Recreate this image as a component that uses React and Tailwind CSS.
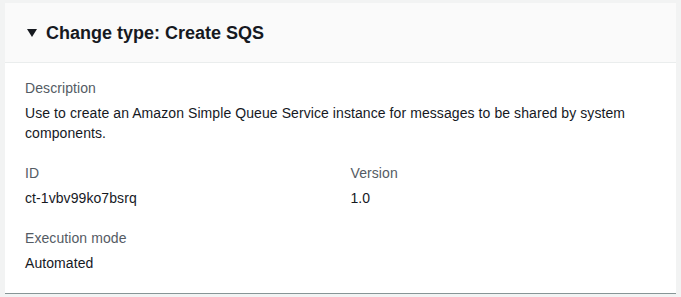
import React from 'react';

const Field = ({ label, children }) => (
  <div>
    <div className="text-[14px] leading-5 text-[#545b64] tracking-[0.08px]">{label}</div>
    <div className="mt-[5px] text-[14px] leading-5 text-[#16191f] tracking-[0.08px]">{children}</div>
  </div>
);

const App = () => {
  return (
    <div className="min-h-screen bg-[#f2f3f3] pt-[3px] px-[5px] font-['Liberation_Sans',Arial,sans-serif]">
      <div className="bg-white border-b border-[#879596]">
        {/* Header */}
        <div className="h-[60px] bg-[#fafafa] border-b border-[#eaeded] flex items-center pl-[22px]">
          <svg width="10" height="8" viewBox="0 0 10 8" className="mr-[9px]">
            <path d="M0 0 H10 L5 8 Z" fill="#16191f" />
          </svg>
          <h2 className="text-[18px] font-bold leading-[22px] text-[#16191f]">Change type: Create SQS</h2>
        </div>

        {/* Body */}
        <div className="px-5 pt-[15px] pb-[20px]">
          <Field label="Description">
            Use to create an Amazon Simple Queue Service instance for messages to be shared by system components.
          </Field>
          <div className="grid grid-cols-2 gap-x-5 mt-5">
            <Field label="ID">ct-1vbv99ko7bsrq</Field>
            <Field label="Version">1.0</Field>
          </div>
          <div className="mt-5">
            <Field label="Execution mode">Automated</Field>
          </div>
        </div>
      </div>
    </div>
  );
};

export default App;
